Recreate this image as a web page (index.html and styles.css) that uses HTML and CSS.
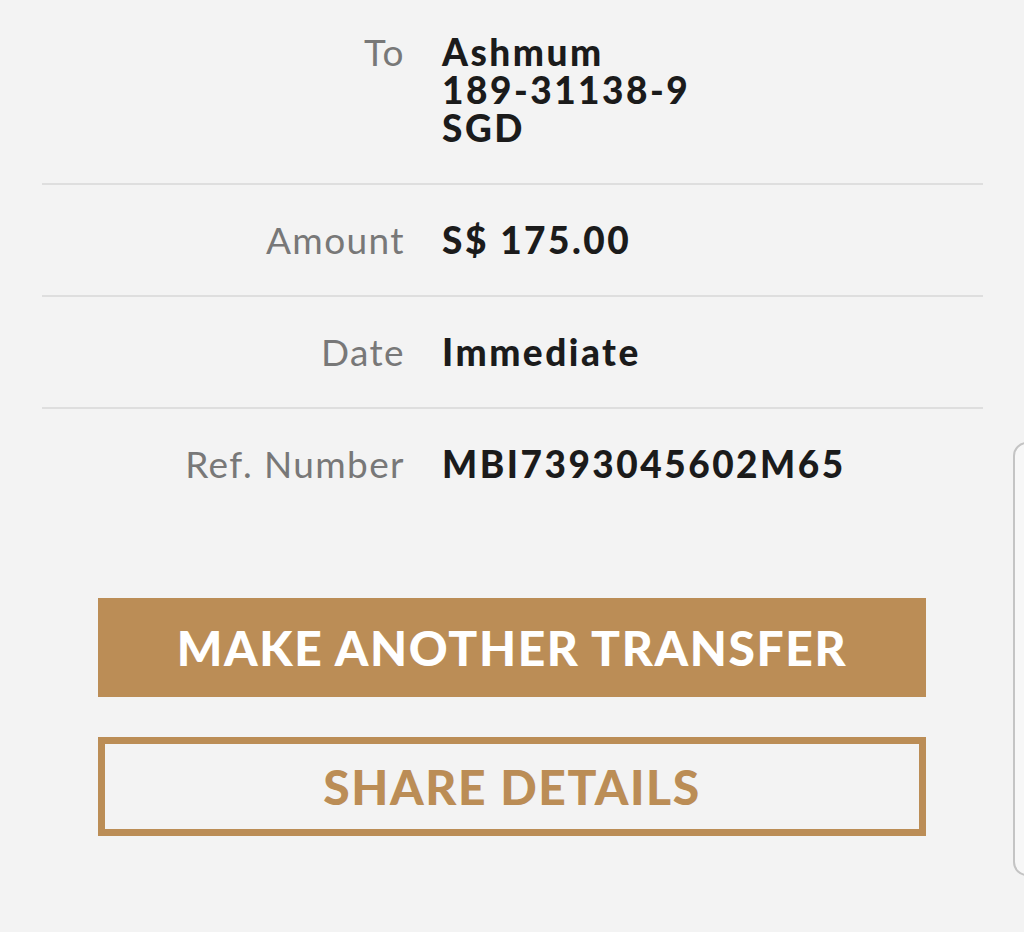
FILE: index.html
```html
<!DOCTYPE html>
<html>
<head>
<meta charset="utf-8">
<link rel="stylesheet" href="styles.css">
</head>
<body>
<div class="page">
  <div class="details">
    <div class="row first">
      <div class="label">To</div>
      <div class="value">
        <div class="line">Ashmum</div>
        <div class="line">189-31138-9</div>
        <div class="line">SGD</div>
      </div>
    </div>
    <div class="row">
      <div class="label">Amount</div>
      <div class="value">S$ 175.00</div>
    </div>
    <div class="row">
      <div class="label">Date</div>
      <div class="value">Immediate</div>
    </div>
    <div class="row last">
      <div class="label">Ref. Number</div>
      <div class="value">MBI7393045602M65</div>
    </div>
  </div>
  <div class="actions">
    <button class="btn primary">MAKE ANOTHER TRANSFER</button>
    <button class="btn outline">SHARE DETAILS</button>
  </div>
  <div class="scroll-tab"></div>
</div>
</body>
</html>
```
FILE: styles.css
```css
html, body {
  margin: 0;
  padding: 0;
  background: #f3f3f3;
}
body {
  font-family: Lato, "Noto Sans", sans-serif;
  width: 1024px;
  height: 932px;
  overflow: hidden;
}
.page {
  position: relative;
  width: 1024px;
  height: 932px;
}
.details {
  margin: -3px 41px 0 42px;
}
.row {
  display: flex;
  gap: 37px;
  padding: 36px 0;
  border-bottom: 2px solid #dedede;
  line-height: 38px;
}
.row.last {
  border-bottom: none;
}
.label {
  width: 363px;
  flex: none;
  text-align: right;
  color: #787878;
  font-size: 37px;
  font-weight: 400;
  letter-spacing: 1.4px;
}
.value {
  color: #1b1b1b;
  font-size: 37px;
  font-weight: 900;
  letter-spacing: 2.5px;
}
.line {
  height: 38px;
}
.actions {
  margin: 79px 98px 0 98px;
  display: flex;
  flex-direction: column;
  gap: 40px;
}
.btn {
  height: 99px;
  padding: 0;
  font-family: Lato, "Noto Sans", sans-serif;
  font-weight: 900;
  font-size: 48px;
  letter-spacing: 1.6px;
  border-radius: 0;
  cursor: pointer;
}
.btn.primary {
  background: #bb8d56;
  color: #ffffff;
  border: none;
}
.btn.outline {
  background: transparent;
  color: #bb8d56;
  border: 7px solid #bb8d56;
}
.scroll-tab {
  position: absolute;
  left: 1013px;
  top: 445px;
  width: 30px;
  height: 430px;
  border: 2px solid #c4c4c4;
  border-radius: 14px;
  background: #f7f7f7;
}
```
